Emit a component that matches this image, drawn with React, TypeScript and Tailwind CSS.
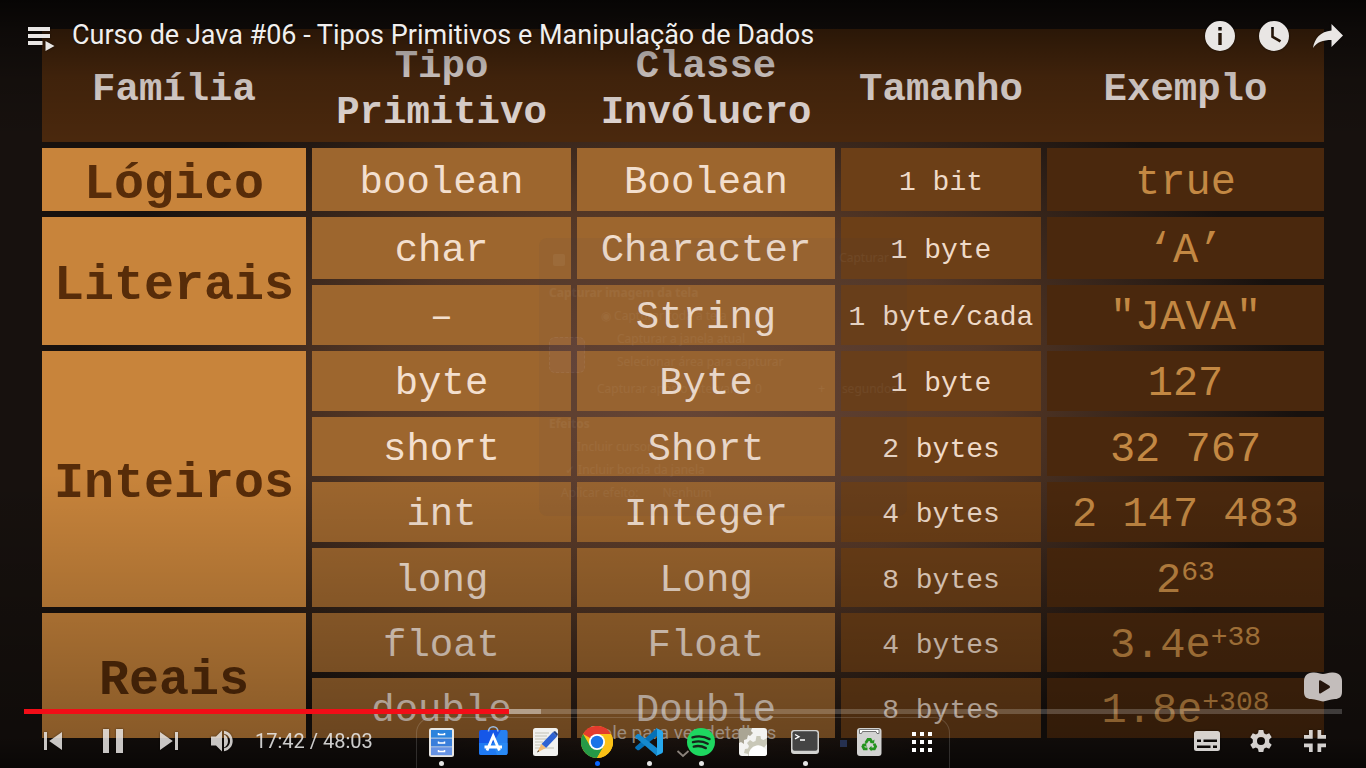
import React from "react";

type Row = {
  family?: { name: string; span: number };
  primitive: string;
  wrapper: string;
  size: string;
  example: string;
  exponent?: string;
  height: string;
};

const rows: Row[] = [
  { family: { name: "Lógico", span: 1 }, primitive: "boolean", wrapper: "Boolean", size: "1 bit", example: "true", height: "h-[63px]" },
  { family: { name: "Literais", span: 2 }, primitive: "char", wrapper: "Character", size: "1 byte", example: "‘A’", height: "h-[62px]" },
  { primitive: "–", wrapper: "String", size: "1 byte/cada", example: '"JAVA"', height: "h-[60px]" },
  { family: { name: "Inteiros", span: 4 }, primitive: "byte", wrapper: "Byte", size: "1 byte", example: "127", height: "h-[60px]" },
  { primitive: "short", wrapper: "Short", size: "2 bytes", example: "32 767", height: "h-[59px]" },
  { primitive: "int", wrapper: "Integer", size: "4 bytes", example: "2 147 483", height: "h-[60px]" },
  { primitive: "long", wrapper: "Long", size: "8 bytes", example: "2", exponent: "63", height: "h-[59px]" },
  { family: { name: "Reais", span: 2 }, primitive: "float", wrapper: "Float", size: "4 bytes", example: "3.4e", exponent: "+38", height: "h-[59px]" },
  { primitive: "double", wrapper: "Double", size: "8 bytes", example: "1.8e", exponent: "+308", height: "h-[60px]" },
];

function TypesTable() {
  const head = "p-0 pt-2 align-middle bg-[#4a280d] text-[39px] leading-[46px] font-bold text-[#e6dcd8]";
  const cell = "p-0 pt-[6px] align-middle leading-[48px]";
  return (
    <table className="w-full table-fixed border-separate border-spacing-[6px] text-center font-['Liberation_Mono',monospace] whitespace-nowrap">
      <colgroup>
        <col className="w-[264px]" />
        <col className="w-[259px]" />
        <col className="w-[258px]" />
        <col className="w-[200px]" />
        <col className="w-[277px]" />
      </colgroup>
      <thead>
        <tr className="h-[113px]">
          <th scope="col" className={head + " shadow-[6px_0_0_#4a280d]"}>Família</th>
          <th scope="col" className={head + " shadow-[6px_0_0_#4a280d]"}>Tipo<br />Primitivo</th>
          <th scope="col" className={head + " shadow-[6px_0_0_#4a280d]"}>Classe<br />Invólucro</th>
          <th scope="col" className={head + " shadow-[6px_0_0_#4a280d]"}>Tamanho</th>
          <th scope="col" className={head}>Exemplo</th>
        </tr>
      </thead>
      <tbody>
        {rows.map((r) => (
          <tr key={r.primitive} className={r.height}>
            {r.family && (
              <th scope="rowgroup" rowSpan={r.family.span} className="bg-[#c8843b] p-0 pt-[10px] align-middle text-[50px] leading-[52px] font-bold text-[#572c09]">
                {r.family.name}
              </th>
            )}
            <td className={cell + " bg-[#9d662e] text-[39px] text-[#f3dfce]"}>{r.primitive}</td>
            <td className={cell + " bg-[#9d662e] text-[39px] text-[#f3dfce]"}>{r.wrapper}</td>
            <td className={cell + " bg-[#6c3f17] text-[28px] text-[#efdac8]"}>{r.size}</td>
            <td className={cell + " bg-[#4a280d] text-[42px] text-[#c38843]"}>
              {r.example}
              {r.exponent && <sup className="relative -top-3 align-baseline text-[28px] leading-none">{r.exponent}</sup>}
            </td>
          </tr>
        ))}
      </tbody>
    </table>
  );
}

/* Screenshot dialog, caught while it fades out over the video. */
function FadingDialog() {
  return (
    <div aria-hidden="true" className="pointer-events-none absolute top-[238px] left-[539px] flex h-[278px] w-[368px] flex-col rounded-lg bg-[#30405a]/5 px-[10px] pt-2 font-['Noto_Sans',sans-serif] text-xs leading-[23px] text-white/5">
      <div className="flex justify-between pr-2">
        <span className="mt-2 ml-1 size-3 rounded-xs bg-white/5" />
        <span>Capturar</span>
      </div>
      <p className="mt-3 font-bold">Capturar imagem da tela</p>
      <div className="flex items-end gap-4">
        <span className="size-9 rounded-md border border-dashed border-white/5 bg-[#b0a0d0]/5" />
        <div>
          <p>◉ Capturar toda a tela</p>
          <p className="pl-4">Capturar a janela atual</p>
          <p className="pl-4">Selecionar área para capturar</p>
        </div>
      </div>
      <p className="mt-1 flex pl-12">
        <span className="w-40">Capturar após o intervalo</span>
        <span className="w-16">0</span>
        <span className="w-6">+</span>
        <span>segundos</span>
      </p>
      <p className="mt-3 font-bold">Efeitos</p>
      <p className="pl-7">Incluir cursor</p>
      <p className="pl-4">✓ Incluir borda da janela</p>
      <p className="flex gap-6 pl-3"><span>Aplicar efeito:</span><span>Nenhum</span></p>
    </div>
  );
}

function PlayerButton({ label, children }: { label: string; children: React.ReactNode }) {
  return (
    <button type="button" aria-label={label} className="flex size-[54px] shrink-0 items-center justify-center text-[#e9e6e4] drop-shadow-[0_0_1px_rgba(0,0,0,0.6)]">
      <svg viewBox="0 0 54 54" className="size-[54px]" fill="currentColor">{children}</svg>
    </button>
  );
}

function TopBar() {
  return (
    <header className="absolute inset-x-0 top-0 flex items-start justify-between pt-[9px] pr-[11px] pl-[14px]">
      <div className="flex min-w-0 items-start">
        <PlayerButton label="Playlist">
          <path d="M14 18h22v4H14zM14 25h22v4H14zM14 32h14.500v4H14zM31.500 32l9 5-9 5z" />
        </PlayerButton>
        <h1 className="ml-1 truncate pt-2 font-[Roboto,sans-serif] text-[27px] leading-9 text-[#f1efee] [text-shadow:0_0_2px_rgba(0,0,0,0.6)]">
          Curso de Java #06 - Tipos Primitivos e Manipulação de Dados
        </h1>
      </div>
      <div className="flex shrink-0">
        <PlayerButton label="Informações">
          <path fillRule="evenodd" d="M27 12a15 15 0 1 0 0 30a15 15 0 0 0 0-30zM25.300 18h3.400v3.400h-3.400zM25.300 24h3.400v12h-3.400z" />
        </PlayerButton>
        <PlayerButton label="Assistir mais tarde">
          <path fillRule="evenodd" d="M27 12a15 15 0 1 0 0 30a15 15 0 0 0 0-30zM24.200 18h2.600v9l7.400 4.300-1.400 2.300-8.600-5.200z" />
        </PlayerButton>
        <PlayerButton label="Compartilhar">
          <path d="M30.500 15L42 26.500 30.500 38v-7C22 31 16 33 12 39c1.500-9.500 7.500-16.500 18.500-17.500z" />
        </PlayerButton>
      </div>
    </header>
  );
}

function Controls() {
  return (
    <footer className="absolute inset-x-0 bottom-0 px-6 font-[Roboto,sans-serif]">
      <button type="button" aria-label="Marca do canal" className="ml-auto block h-[30px] w-[38px]">
        <svg viewBox="0 0 38 30" className="size-full">
          <path fill="#c3bdbb" d="M9 .5C13 0 16 2 19 2S25 0 29 .5C35 1 38 4 38 9V20C38 25 35 27 31 27C26 27 22 29.500 19 29.500S12 27 7 27C3 27 0 25 0 20V9C0 4 3 1 9 .5z" />
          <path fill="#25150d" d="M15 9.500q0-1.700 1.800-1l8.600 5.300q1.400 1.200 0 2.200l-8.600 5.200q-1.800.7-1.800-1z" />
        </svg>
      </button>
      <div role="progressbar" aria-label="Progresso" aria-valuenow={1062} aria-valuemin={0} aria-valuemax={2883} className="mt-[7px] flex h-[5px] bg-white/20">
        <span className="w-[36.8%] bg-[#f20d17]" />
        <span className="w-[2.4%] bg-white/35" />
      </div>
      <div className="flex h-[54px] items-center justify-between">
        <div className="flex items-center opacity-85">
          <div className="ml-[2px] flex gap-1">
            <PlayerButton label="Anterior"><path d="M18 18h3v18h-3zM23.200 27L36 36V18z" /></PlayerButton>
            <PlayerButton label="Pausar"><path d="M19 15h6v24h-6zM32 15h7v24h-7z" /></PlayerButton>
            <PlayerButton label="Próximo"><path d="M18 18v18l12.800-9zM33 18h3v18h-3z" /></PlayerButton>
            <PlayerButton label="Volume">
              <path d="M11 22.500v9h5l6 6V16.500l-6 6zM24 20.500v13c2.500-1 4-3.500 4-6.500s-1.500-5.500-4-6.500z" />
              <path d="M24 16.800v3c4 .8 6 3.800 6 7.200s-2 6.400-6 7.200v3c5.500-1 8.700-5.200 8.700-10.200s-3.200-9.200-8.700-10.200z" />
            </PlayerButton>
          </div>
          <span className="pl-px text-xl leading-7 text-[#eee]">17:42 / 48:03</span>
        </div>
        <div className="flex opacity-90">
          <PlayerButton label="Legendas">
            <path fillRule="evenodd" d="M16.500 17h21a2.500 2.500 0 0 1 2.500 2.500v15a2.500 2.500 0 0 1-2.500 2.500h-21a2.500 2.500 0 0 1-2.500-2.500v-15A2.500 2.500 0 0 1 16.500 17zM17 25.500v2.500h4v-2.500zM23.500 25.500v2.500H37v-2.500zM17 31.500v2.500h13.500v-2.500zM33 31.500v2.500h4v-2.500z" />
          </PlayerButton>
          <PlayerButton label="Configurações">
            <path fillRule="evenodd" transform="translate(0 .5)" d="M24.700 15.500h4.600l.7 3.200 2.100 1.200 3.100-1.100 2.500 4-2.500 2.200v3l2.500 2.200-2.500 4-3.100-1.100-2.100 1.200-.7 3.200h-4.600l-.7-3.200-2.100-1.200-3.100 1.100-2.500-4 2.500-2.200v-3l-2.500-2.200 2.500-4 3.100 1.100 2.100-1.200zM27 22.500a4 4 0 1 0 0 8a4 4 0 0 0 0-8z" />
          </PlayerButton>
          <PlayerButton label="Sair da tela cheia">
            <path d="M16 21h5v-5h3.700v8.700H16zM29.500 16h3.700v5H38v3.700h-8.500zM16 29.500h8.700V38H21v-4.800h-5zM29.500 29.500H38v3.700h-4.800V38h-3.700z" />
          </PlayerButton>
        </div>
      </div>
    </footer>
  );
}

const apps: { name: string; dot?: string; icon: React.ReactNode }[] = [
  {
    name: "Arquivos",
    dot: "bg-[#e4e4e4]",
    icon: (
      <>
        <rect x="4" y="2" width="25" height="29" rx="2.500" fill="#e9e7e3" />
        <rect x="6" y="4" width="21" height="7.700" fill="#2b83dc" />
        <rect x="6" y="12.500" width="21" height="8" fill="#397edb" />
        <rect x="6" y="21.200" width="21" height="8" fill="#6693e4" />
        <path d="M13.500 7v1.500h6V7M13.500 15.500V17h6v-1.500M13.500 24v1.500h6V24" fill="none" stroke="#fff" strokeWidth="1.500" />
      </>
    ),
  },
  {
    name: "Loja",
    icon: (
      <>
        <rect x="2" y="4" width="28.500" height="25" rx="2" fill="#1557e8" />
        <path d="M2 17h28.500v10a2 2 0 0 1-2 2H4a2 2 0 0 1-2-2z" fill="#1f7af3" />
        <path d="M16 17L24 4h4.500a2 2 0 0 1 2 2v21a2 2 0 0 1-2 2H20z" fill="#2d91f5" opacity=".7" />
        <path d="M11.500 5.500a4.700 4.700 0 0 1 9.400 0" fill="none" stroke="#9dbbe0" strokeWidth="1.600" />
        <path d="M10 24.500L16.200 10l6.200 14.500M7.500 21h17.500" fill="none" stroke="#fff" strokeWidth="2.800" />
      </>
    ),
  },
  {
    name: "Editor de texto",
    icon: (
      <>
        <rect x="4" y="2" width="25" height="28" rx="2.500" fill="#f1f1ef" />
        <path d="M6 7h14M6 10h12M6 13h12M6 16h8M6 19h7M6 22h19" stroke="#c1c1b5" strokeWidth="1" />
        <path d="M12.500 18L24 6l4 4.500L17 22z" fill="#2e62d3" />
        <path d="M24 6l2-1 3 3-1 2.500z" fill="#254489" />
        <path d="M12.500 18L8 26.500 17 22z" fill="#f0b974" />
        <path d="M9.200 24.200L8 26.500l2.300-1.200z" fill="#333" />
      </>
    ),
  },
  {
    name: "Chrome",
    dot: "bg-[#0866ff]",
    icon: (
      <>
        <circle cx="16" cy="16" r="16" fill="#fbc116" />
        <path d="M16 16L2.100 8A16 16 0 0 1 29.900 8z" fill="#e33b2e" />
        <path d="M2.100 8A16 16 0 0 0 16 32l6.900-12L9.100 20z" fill="#269947" />
        <path d="M16 8h13.900A16 16 0 0 1 16 32l6.900-12z" fill="#fbc116" />
        <circle cx="16" cy="16" r="8" fill="#fff" />
        <circle cx="16" cy="16" r="6.200" fill="#1a73e8" />
      </>
    ),
  },
  {
    name: "Visual Studio Code",
    dot: "bg-[#e4e4e4]",
    icon: (
      <>
        <path d="M24 2v8L6 24.300 4.500 24.300 2.200 22.300V21z" fill="#0571b7" />
        <path d="M24 30v-8L6 8 4.500 8 2.200 10V11.300z" fill="#1589ce" />
        <path d="M23 2l6 2.800a2 2 0 0 1 1 1.700v19a2 2 0 0 1-1 1.700L23 30l1-2V4z" fill="#27a8ed" />
      </>
    ),
  },
  {
    name: "Spotify",
    dot: "bg-[#e4e4e4]",
    icon: (
      <>
        <circle cx="16" cy="16" r="14" fill="#1ed760" />
        <path d="M7.500 11.300q9-2.600 17 1.800M8 16.100q7.700-2 14.700 1.600M8.800 20.600q6.300-1.600 12 1.500" fill="none" stroke="#17251b" strokeWidth="2.400" strokeLinecap="round" />
      </>
    ),
  },
  {
    name: "Ajustes",
    icon: (
      <>
        <rect x="2" y="2" width="28" height="28" rx="3" fill="#f3f3f1" />
        <path d="M2 5q0-3 3-3h10l-1 3 2 2-3 3-2-1-1 4-3 1v4l-3-2-2 1z" fill="#aaa594" />
        <path d="M19.500 10h4l.5 3 2.500 1 3.500-2v6l-10 12H11v-2l-4-1 1-4 3-.5 1-2.500-2-3 3-3 3 2 2.500-1z" fill="#c9c8b8" />
        <path d="M12 30a9 9 0 0 1 18-3q0 3-3 3z" fill="#fff" />
      </>
    ),
  },
  {
    name: "Terminal",
    dot: "bg-[#e4e4e4]",
    icon: (
      <>
        <rect x="2" y="4" width="28" height="24" rx="3" fill="#d2d2d0" />
        <rect x="3.500" y="5.300" width="25" height="19.500" rx="2" fill="#444" />
        <path d="M6 8.500l4 2.200-4 2.200M11 14h5" fill="none" stroke="#fff" strokeWidth="1.300" />
      </>
    ),
  },
];

function DockIcon({ name, dot, children }: { name: string; dot?: string; children: React.ReactNode }) {
  return (
    <button type="button" aria-label={name} className="flex w-8 flex-col items-center gap-[3px]">
      <svg viewBox="0 0 32 32" className="size-8">{children}</svg>
      <span className={"size-[5px] rounded-full " + (dot ?? "")} />
    </button>
  );
}

function Dock() {
  return (
    <nav aria-label="Dock" className="absolute bottom-0 left-1/2 flex h-[51px] w-[534px] -translate-x-1/2 items-start gap-5 rounded-t-2xl border border-b-0 border-white/15 px-2 pt-2">
      {apps.map((a) => (
        <DockIcon key={a.name} name={a.name} dot={a.dot}>{a.icon}</DockIcon>
      ))}
      <span className="absolute top-[22px] left-[423px] size-[7px] bg-[#25304f]" />
      <div className="ml-3 flex gap-5">
        <DockIcon name="Lixeira">
          <rect x="4" y="2" width="24.500" height="28" rx="3" fill="#d2d2d1" />
          <path d="M6.500 3.500h19.500v4h-2l-1-2H9.500l-1 2h-2z" fill="#fff" stroke="#555" strokeWidth=".8" />
          <g fill="none" stroke="#24931f" strokeWidth="2.800">
            <path d="M12.700 17l2.300-3.500h2.300l1.700 2.700" />
            <path d="M21 17.700l1.600 2.900-1.200 2.200h-3.900" />
            <path d="M14.500 22.800h-3.400l-1.200-2.200 1.400-2.500" />
          </g>
          <path d="M16.800 17l4.200.5.500-4zM18.500 19.800v5.400L15.800 22.500zM9 18.500l4-1.500.7 4z" fill="#24931f" />
        </DockIcon>
        <DockIcon name="Mostrar aplicativos">
          <path fill="#fff" d="M7 6h4v4H7zM15 6h4v4h-4zM23 6h4v4h-4zM7 14h4v4H7zM15 14h4v4h-4zM23 14h4v4h-4zM7 22h4v4H7zM15 22h4v4h-4zM23 22h4v4h-4z" />
        </DockIcon>
      </div>
    </nav>
  );
}

export default function App() {
  return (
    <main className="relative min-h-screen overflow-hidden bg-[#17110e] bg-[radial-gradient(ellipse_45%_50%_at_50%_52%,#6b4734_0%,#543726_50%,#17110e_100%)] px-9 pt-[23px] pb-6">
      <TypesTable />
      <FadingDialog />
      <div className="pointer-events-none absolute inset-x-0 top-0 h-[140px] bg-[linear-gradient(to_bottom,rgba(0,0,0,0.7)_0%,rgba(0,0,0,0.43)_21%,rgba(0,0,0,0.15)_55%,transparent_100%)]" />
      <div className="pointer-events-none absolute inset-x-0 bottom-0 h-[320px] bg-[linear-gradient(to_top,rgba(0,0,0,0.6)_0%,rgba(0,0,0,0.32)_9%,rgba(0,0,0,0.16)_50%,transparent_92%)]" />
      <div className="absolute inset-x-0 bottom-0 flex h-12 flex-col items-center font-[Roboto,sans-serif] text-[19px] leading-[26px] text-[#aaa098]/80">
        <span>Role para ver detalhes</span>
        <svg viewBox="0 0 14 8" className="mt-1 h-2 w-[14px]" fill="none" stroke="currentColor" strokeWidth="1.800"><path d="M1.500 1l5.500 5 5.500-5" /></svg>
      </div>
      <TopBar />
      <Controls />
      <Dock />
    </main>
  );
}
